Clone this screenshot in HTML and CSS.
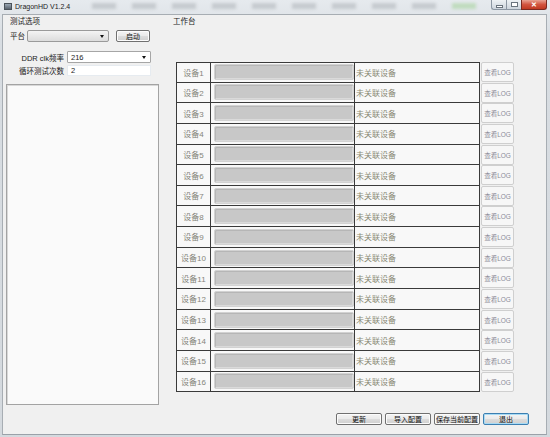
FILE: index.html
```html
<!DOCTYPE html>
<html lang="zh-CN">
<head>
    <meta charset="UTF-8">
    <meta name="viewport" content="width=device-width, initial-scale=1.0">
    <title>DragonHD V1.2.4</title>
    <link rel="stylesheet" href="styles.css">
</head>
<body>
    <div class="window">
        <div class="titlebar">
            <span class="app-icon"></span>
            <span class="title">DragonHD V1.2.4</span>
            <div class="ghosts">
                <span></span><span></span><span></span><span></span><span></span>
                <span></span><span></span><span></span><span></span><span class="green"></span>
            </div>
            <div class="caption">
                <span class="cap-btn cap-min"><i></i></span>
                <span class="cap-btn cap-max"><i></i></span>
                <span class="cap-btn cap-close">&#x2715;</span>
            </div>
        </div>

        <div class="client">
            <div class="left">
                <div class="group-title">测试选项</div>
                <div class="form-row row-platform">
                    <label class="lbl">平台</label>
                    <div class="combo combo-gray"><span class="arrow"></span></div>
                    <button class="btn btn-start">启动</button>
                </div>
                <div class="form-row row-ddr">
                    <label class="lbl lbl-right">DDR clk频率</label>
                    <div class="combo combo-white"><span class="val">216</span><span class="arrow"></span></div>
                </div>
                <div class="form-row row-loop">
                    <label class="lbl lbl-right">循环测试次数</label>
                    <div class="field"><span class="val">2</span></div>
                </div>
                <div class="listbox"></div>
            </div>

            <div class="right">
                <div class="group-title">工作台</div>
                <div class="devices">
                    <div class="row first"><div class="cells"><div class="name">设备1</div><div class="bar-cell"><div class="bar"></div></div><div class="status">未关联设备</div></div><button class="log">查看LOG</button></div>
                    <div class="row"><div class="cells"><div class="name">设备2</div><div class="bar-cell"><div class="bar"></div></div><div class="status">未关联设备</div></div><button class="log">查看LOG</button></div>
                    <div class="row"><div class="cells"><div class="name">设备3</div><div class="bar-cell"><div class="bar"></div></div><div class="status">未关联设备</div></div><button class="log">查看LOG</button></div>
                    <div class="row"><div class="cells"><div class="name">设备4</div><div class="bar-cell"><div class="bar"></div></div><div class="status">未关联设备</div></div><button class="log">查看LOG</button></div>
                    <div class="row"><div class="cells"><div class="name">设备5</div><div class="bar-cell"><div class="bar"></div></div><div class="status">未关联设备</div></div><button class="log">查看LOG</button></div>
                    <div class="row"><div class="cells"><div class="name">设备6</div><div class="bar-cell"><div class="bar"></div></div><div class="status">未关联设备</div></div><button class="log">查看LOG</button></div>
                    <div class="row"><div class="cells"><div class="name">设备7</div><div class="bar-cell"><div class="bar"></div></div><div class="status">未关联设备</div></div><button class="log">查看LOG</button></div>
                    <div class="row"><div class="cells"><div class="name">设备8</div><div class="bar-cell"><div class="bar"></div></div><div class="status">未关联设备</div></div><button class="log">查看LOG</button></div>
                    <div class="row"><div class="cells"><div class="name">设备9</div><div class="bar-cell"><div class="bar"></div></div><div class="status">未关联设备</div></div><button class="log">查看LOG</button></div>
                    <div class="row"><div class="cells"><div class="name">设备10</div><div class="bar-cell"><div class="bar"></div></div><div class="status">未关联设备</div></div><button class="log">查看LOG</button></div>
                    <div class="row"><div class="cells"><div class="name">设备11</div><div class="bar-cell"><div class="bar"></div></div><div class="status">未关联设备</div></div><button class="log">查看LOG</button></div>
                    <div class="row"><div class="cells"><div class="name">设备12</div><div class="bar-cell"><div class="bar"></div></div><div class="status">未关联设备</div></div><button class="log">查看LOG</button></div>
                    <div class="row"><div class="cells"><div class="name">设备13</div><div class="bar-cell"><div class="bar"></div></div><div class="status">未关联设备</div></div><button class="log">查看LOG</button></div>
                    <div class="row"><div class="cells"><div class="name">设备14</div><div class="bar-cell"><div class="bar"></div></div><div class="status">未关联设备</div></div><button class="log">查看LOG</button></div>
                    <div class="row"><div class="cells"><div class="name">设备15</div><div class="bar-cell"><div class="bar"></div></div><div class="status">未关联设备</div></div><button class="log">查看LOG</button></div>
                    <div class="row"><div class="cells"><div class="name">设备16</div><div class="bar-cell"><div class="bar"></div></div><div class="status">未关联设备</div></div><button class="log">查看LOG</button></div>
                </div>
                <div class="actions">
                    <button class="btn">更新</button>
                    <button class="btn">导入配置</button>
                    <button class="btn">保存当前配置</button>
                    <button class="btn btn-default">退出</button>
                </div>
            </div>
        </div>
    </div>
</body>
</html>
```

FILE: styles.css
```css
* {
    box-sizing: border-box;
}
body {
    margin: 0;
    font-family: "Liberation Sans", "Noto Sans CJK SC", sans-serif;
    font-size: 7.5px;
    color: #1a1a1a;
}
.window {
    width: 550px;
    height: 437px;
    background: linear-gradient(#e6eaee, #d8dde2 40px, #d4d9de);
    padding: 0 3px 2px 2px;
    display: flex;
    flex-direction: column;
    overflow: hidden;
}
.titlebar {
    height: 14px;
    flex-shrink: 0;
    display: flex;
    align-items: flex-start;
}
.app-icon {
    flex-shrink: 0;
    width: 8px;
    height: 7px;
    margin: 3px 0 0 2px;
    background: linear-gradient(#9aa7b4, #59636e);
    border: 1px solid #4a525a;
}
.title {
    flex-shrink: 0;
    white-space: nowrap;
    margin: 3px 0 0 3px;
    font-size: 7px;
    color: #222;
}
.ghosts {
    flex: 1;
    min-width: 0;
    overflow: hidden;
    display: flex;
    gap: 16px;
    margin: 3px 10px 0 22px;
    filter: blur(1.5px);
}
.ghosts span {
    flex-shrink: 0;
    width: 24px;
    height: 6px;
    background: #b3b8bd;
    opacity: 0.6;
}
.ghosts span.green {
    background: #a9d3a0;
}
.caption {
    flex-shrink: 0;
    display: flex;
    height: 10px;
}
.cap-btn {
    height: 10px;
    border: 1px solid #8c97a3;
    border-top: none;
    background: linear-gradient(#eef2f5, #cdd5dd);
    display: flex;
    align-items: center;
    justify-content: center;
}
.cap-min,
.cap-max {
    width: 15px;
    border-right: none;
}
.cap-min {
    border-radius: 0 0 0 3px;
}
.cap-min i {
    width: 7px;
    height: 3px;
    margin-top: 3px;
    border: 1px solid #6a747e;
    background: #fff;
}
.cap-max i {
    width: 7px;
    height: 5px;
    border: 1px solid #6a747e;
    background: #fff;
}
.cap-close {
    width: 26px;
    border-color: #7a2a20;
    border-radius: 0 0 3px 0;
    background: linear-gradient(#e8a393, #d2553f 50%, #c03a22);
    color: #fff;
    font-size: 7px;
    font-weight: bold;
}

.client {
    flex: 1;
    background: #f0f0f0;
    display: flex;
    border: 1px solid #a7adb3;
    border-bottom: 1px solid #9aa1a8;
}
.group-title {
    height: 10px;
    line-height: 10px;
    margin-top: 2px;
}
.left {
    width: 160px;
    display: flex;
    flex-direction: column;
}
.left .group-title {
    margin-left: 7px;
}
.form-row {
    display: flex;
    align-items: center;
}
.lbl {
    white-space: nowrap;
}
.row-platform {
    margin-top: 2px;
    padding-left: 7px;
    height: 13px;
}
.row-platform .lbl {
    width: 17px;
}
.combo {
    position: relative;
    height: 12px;
    border: 1px solid #a6a6a6;
    border-radius: 2px;
    display: flex;
    align-items: center;
    padding-left: 3px;
}
.combo-gray {
    width: 82px;
    background: linear-gradient(#f4f4f4, #e8e8e8 50%, #dcdcdc);
    border-color: #9a9a9a;
}
.combo-white {
    width: 84px;
    background: #fff;
    border-radius: 1px;
}
.arrow {
    position: absolute;
    right: 4px;
    top: 4px;
    border-left: 2.5px solid transparent;
    border-right: 2.5px solid transparent;
    border-top: 3px solid #111;
}
.val {
    font-size: 7.5px;
}
.btn {
    font-family: inherit;
    font-size: 7px;
    color: #111;
    height: 12px;
    padding: 0;
    border: 1px solid #707070;
    border-radius: 2px;
    background: linear-gradient(#f4f4f4, #ebebeb 45%, #dddddd 50%, #cfcfcf);
    box-shadow: inset 0 0 0 1px #fcfcfc;
}
.btn-start {
    width: 34px;
    margin-left: 7px;
    margin-top: 1px;
}
.row-ddr {
    margin-top: 9px;
    height: 12px;
}
.lbl-right {
    width: 64px;
    text-align: right;
    padding-right: 3px;
}
.row-loop {
    margin-top: 2px;
    height: 11px;
}
.field {
    width: 84px;
    height: 11px;
    background: #fff;
    border: 1px solid #e6ebf0;
    padding-left: 3px;
    display: flex;
    align-items: center;
}
.listbox {
    margin: 8px 0 0 3px;
    width: 153px;
    height: 321px;
    background: #fafafa;
    border: 1px solid #a3a3a3;
    box-shadow: inset 1px 1px 0 #d8d8d8;
}

.right {
    flex: 1;
    display: flex;
    flex-direction: column;
}
.right .group-title {
    margin-left: 10px;
}
.devices {
    margin: 35px 0 0 13px;
    display: flex;
    flex-direction: column;
}
.row {
    display: flex;
    height: 20.65px;
}
.cells {
    display: flex;
    width: 304px;
    border: 1px solid #3a3a3a;
    border-top: none;
    background: #f8f8f8;
}
.row.first .cells {
    border-top: 1px solid #3a3a3a;
}
.name {
    width: 34px;
    border-right: 1px solid #3a3a3a;
    display: flex;
    align-items: center;
    justify-content: center;
    font-size: 8px;
    color: #85857a;
}
.bar-cell {
    width: 144px;
    border-right: 1px solid #3a3a3a;
    display: flex;
    align-items: center;
    padding: 0 0 0 3px;
}
.bar {
    width: 140px;
    height: 16px;
    border: 1px solid #d2d2d2;
    border-radius: 2px;
    background: #c8c8c8;
    box-shadow: inset 1px 1px 0 #b6b6b6, inset -1px -1px 0 #dadada;
}
.status {
    flex: 1;
    display: flex;
    align-items: center;
    padding-left: 1px;
    font-size: 8px;
    color: #8a8a76;
}
.log {
    width: 33px;
    height: 20px;
    margin-left: 1px;
    padding: 0;
    font-family: inherit;
    font-size: 6.5px;
    color: #8c8c98;
    background: #f7f7f7;
    border: 1px solid #cfcfcf;
    border-radius: 2px;
}
.actions {
    margin-top: 21px;
    display: flex;
    justify-content: flex-end;
    gap: 3px;
    padding-right: 17px;
}
.actions .btn {
    width: 46px;
}
.btn-default {
    border-color: #3c7fb1;
    box-shadow: inset 0 0 0 1px #a8dbf5;
}
```
